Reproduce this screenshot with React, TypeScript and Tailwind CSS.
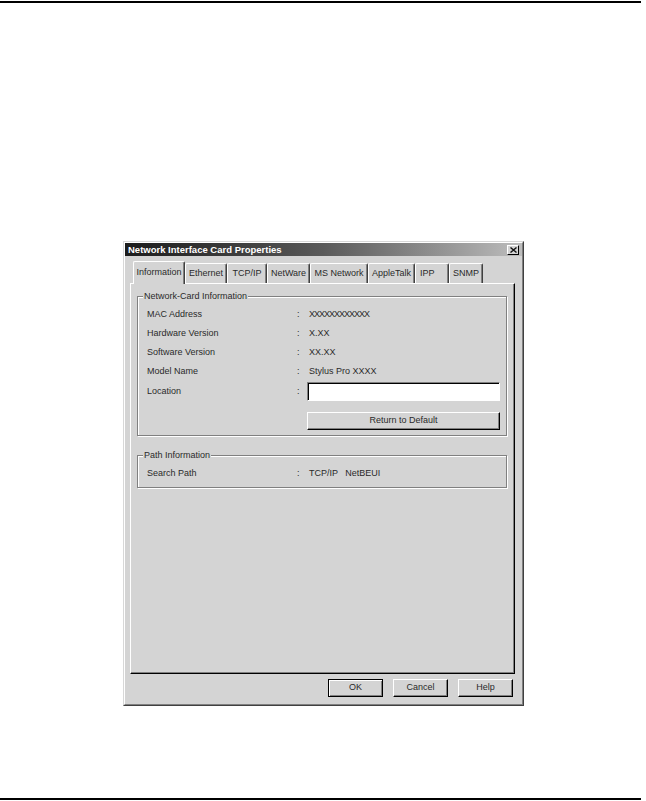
import React from "react";

const tabs = [
  { label: "Information", w: "w-[52px]", active: true },
  { label: "Ethernet", w: "w-[42px]" },
  { label: "TCP/IP", w: "w-[40px]" },
  { label: "NetWare", w: "w-[43px]" },
  { label: "MS Network", w: "w-[58px]" },
  { label: "AppleTalk", w: "w-[47px]" },
  { label: "IPP", w: "w-[34px]", left: true },
  { label: "SNMP", w: "w-[34px]" },
];

function Tab({ label, w, active, left }: { label: string; w: string; active?: boolean; left?: boolean }) {
  if (active) {
    return (
      <div
        className={`relative z-10 -mb-[1px] flex h-[23px] ${w} items-start justify-center rounded-t-[2px] border-l border-t border-r border-l-white border-t-white border-r-[#404040] bg-[#d4d4d4] pt-[4px] shadow-[inset_-1px_0_0_#808080]`}
      >
        {label}
      </div>
    );
  }
  return (
    <div
      className={`flex h-[20px] ${w} items-center ${left ? "justify-start pl-[4px]" : "justify-center"} rounded-t-[2px] border-l border-t border-r border-l-white border-t-white border-r-[#404040] bg-[#d4d4d4] shadow-[inset_-1px_0_0_#808080]`}
    >
      {label}
    </div>
  );
}

function Row({ label, value, h = "h-[19px]" }: { label: string; value: React.ReactNode; h?: string }) {
  return (
    <div className={`grid ${h} grid-cols-[148px_12px_1fr] items-center`}>
      <span>{label}</span>
      <span className="pl-[2px]">:</span>
      <div className="pl-[2px]">{value}</div>
    </div>
  );
}

function Button({ children, def, className = "" }: { children: React.ReactNode; def?: boolean; className?: string }) {
  if (def) {
    return (
      <div className={`flex h-[18px] items-center justify-center border border-black bg-[#d4d4d4] shadow-[inset_1px_1px_0_white,inset_-1px_-1px_0_#808080] ${className}`}>
        {children}
      </div>
    );
  }
  return (
    <div
      className={`flex h-[18px] items-center justify-center border border-t-white border-l-white border-r-black border-b-black bg-[#d4d4d4] shadow-[inset_-1px_-1px_0_#808080] ${className}`}
    >
      {children}
    </div>
  );
}

export default function App() {
  return (
    <div className="flex h-[801px] w-[646px] flex-col bg-white font-['Liberation_Sans',Arial,sans-serif] text-[9px] text-[#2a2a2a]">
      <div className="mt-[1px] h-[2px] w-[641px] bg-black" />

      <div className="ml-[123px] mt-[238px] flex h-[465px] w-[401px] flex-col border border-t-[#d8d8d8] border-l-[#d8d8d8] border-r-[#404040] border-b-[#404040] bg-[#d4d4d4]">
        <div className="flex flex-1 flex-col border border-t-white border-l-white border-r-[#808080] border-b-[#808080]">
          {/* Title bar */}
          <div className="flex h-[13px] items-center bg-linear-to-r from-[#1c1c1c] via-[#5a5a5a] to-[#bdbdbd] pl-[3px] pr-[3px]">
            <span className="text-[9.5px] font-bold leading-none text-white">Network Interface Card Properties</span>
            <div className="ml-auto flex h-[10px] w-[12px] items-center justify-center border border-t-white border-l-white border-r-black border-b-black bg-[#d4d4d4]">
              <svg width="7" height="6" viewBox="0 0 7 6">
                <path d="M0.5 0.5 L6.5 5.5 M6.5 0.5 L0.5 5.5" stroke="#111" strokeWidth="1.4" />
              </svg>
            </div>
          </div>

          {/* Tabs */}
          <div className="ml-[6px] mt-[5px] flex h-[22px] items-end pl-[2px] text-[9px]">
            {tabs.map((t) => (
              <Tab key={t.label} {...t} />
            ))}
          </div>

          {/* Panel */}
          <div className="ml-[5px] flex h-[391px] w-[385px] flex-col border border-t-white border-l-white border-r-black border-b-black pl-[6px] pr-[7px] shadow-[inset_-1px_-1px_0_#808080]">
            {/* Group 1 */}
            <div className="relative mt-[12px] border border-[#808080] pl-[9px] pr-[6px] pt-[8px] pb-[5px] shadow-[inset_1px_1px_0_white,1px_1px_0_white]">
              <span className="absolute -top-[7px] left-[5px] bg-[#d4d4d4] px-[1px]">Network-Card Information</span>
              <Row label="MAC Address" value={<span className="tracking-[-1px]">XXXXXXXXXXXX</span>} />
              <Row label="Hardware Version" value={<span>X.XX</span>} />
              <Row label="Software Version" value={<span>XX.XX</span>} />
              <Row label="Model Name" value={<span>Stylus Pro XXXX</span>} />
              <div className="mt-[1px] grid h-[19px] grid-cols-[148px_12px_1fr] items-center">
                <span>Location</span>
                <span className="pl-[2px]">:</span>
                <div className="h-[19px] border border-t-[#808080] border-l-[#808080] border-r-white border-b-white bg-white shadow-[inset_1px_1px_0_#000]" />
              </div>
              <div className="mt-[11px] grid grid-cols-[160px_1fr]">
                <span />
                <Button>Return to Default</Button>
              </div>
            </div>

            {/* Group 2 */}
            <div className="relative mt-[19px] border border-[#808080] pl-[9px] pr-[6px] pt-[8px] pb-[4px] shadow-[inset_1px_1px_0_white,1px_1px_0_white]">
              <span className="absolute -top-[7px] left-[5px] bg-[#d4d4d4] px-[1px]">Path Information</span>
              <Row label="Search Path" value={<span className="whitespace-pre">TCP/IP   NetBEUI</span>} />
            </div>
          </div>

          {/* Buttons */}
          <div className="mt-[5px] flex justify-end gap-[10px] pr-[9px]">
            <Button def className="w-[55px]">OK</Button>
            <Button className="w-[55px]">Cancel</Button>
            <Button className="w-[55px]">Help</Button>
          </div>
        </div>
      </div>

      <div className="mt-auto mb-[1px] h-[2px] w-[641px] bg-black" />
    </div>
  );
}
